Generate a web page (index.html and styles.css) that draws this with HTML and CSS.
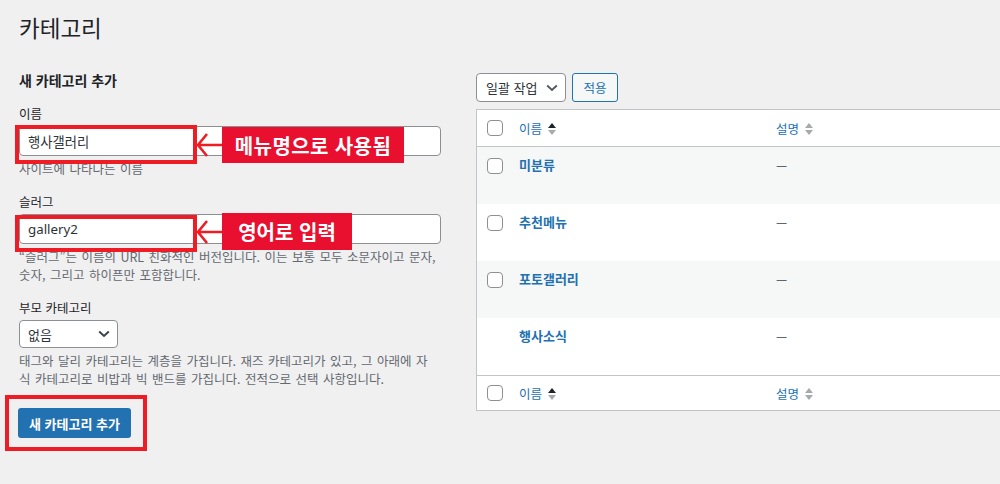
FILE: index.html
```html
<!DOCTYPE html>
<html lang="ko">
<head>
<meta charset="utf-8">
<title>카테고리</title>
<link rel="stylesheet" href="styles.css">
</head>
<body>
<div class="page">
  <h1 class="title">카테고리</h1>
  <div class="cols">
    <div class="col-left">
      <h2 class="form-title">새 카테고리 추가</h2>
      <div class="field">
        <label class="label">이름</label>
        <input class="input" type="text" value="행사갤러리">
        <p class="help">사이트에 나타나는 이름</p>
      </div>
      <div class="field">
        <label class="label">슬러그</label>
        <input class="input" type="text" value="gallery2">
        <p class="help">“슬러그”는 이름의 URL 친화적인 버전입니다. 이는 보통 모두 소문자이고 문자,<br>숫자, 그리고 하이픈만 포함합니다.</p>
      </div>
      <div class="field">
        <label class="label">부모 카테고리</label>
        <div class="select">
          <span>없음</span>
          <svg class="chev" width="12" height="8" viewBox="0 0 12 8"><polyline points="1.2,1.5 6,6 10.8,1.5" fill="none" stroke="#3c434a" stroke-width="2"/></svg>
        </div>
        <p class="help">태그와 달리 카테고리는 계층을 가집니다. 재즈 카테고리가 있고, 그 아래에 자<br>식 카테고리로 비밥과 빅 밴드를 가집니다. 전적으로 선택 사항입니다.</p>
      </div>
      <div class="submit"><span class="btn-primary">새 카테고리 추가</span></div>
    </div>

    <div class="col-right">
      <div class="toolbar">
        <div class="bulk">
          <span>일괄 작업</span>
          <svg class="chev-s" width="12" height="8" viewBox="0 0 12 8"><polyline points="1.2,1.5 6,6 10.8,1.5" fill="none" stroke="#50575e" stroke-width="1.8"/></svg>
        </div>
        <span class="apply">적용</span>
      </div>
      <table class="list">
        <thead>
          <tr>
            <th class="cb"><span class="check"></span></th>
            <th class="name"><span class="sort-link">이름<span class="sort asc"><i class="up"></i><i class="down"></i></span></span></th>
            <th class="desc"><span class="sort-link">설명<span class="sort"><i class="up"></i><i class="down"></i></span></span></th>
          </tr>
        </thead>
        <tbody>
          <tr class="alt">
            <td class="cb"><span class="check"></span></td>
            <td class="name"><strong>미분류</strong></td>
            <td class="desc">—</td>
          </tr>
          <tr>
            <td class="cb"><span class="check"></span></td>
            <td class="name"><strong>추천메뉴</strong></td>
            <td class="desc">—</td>
          </tr>
          <tr class="alt">
            <td class="cb"><span class="check"></span></td>
            <td class="name"><strong>포토갤러리</strong></td>
            <td class="desc">—</td>
          </tr>
          <tr>
            <td class="cb"></td>
            <td class="name"><strong>행사소식</strong></td>
            <td class="desc">—</td>
          </tr>
        </tbody>
        <tfoot>
          <tr>
            <th class="cb"><span class="check"></span></th>
            <th class="name"><span class="sort-link">이름<span class="sort asc"><i class="up"></i><i class="down"></i></span></span></th>
            <th class="desc"><span class="sort-link">설명<span class="sort"><i class="up"></i><i class="down"></i></span></span></th>
          </tr>
        </tfoot>
      </table>
    </div>
  </div>

  <div class="mark box1"></div>
  <svg class="arrow arrow1" width="28" height="28" viewBox="0 0 28 28"><path d="M3 14H27M12 3L3 14L12 25" fill="none" stroke="#ee1c25" stroke-width="2.6"/></svg>
  <div class="tag tag1">메뉴명으로 사용됨</div>

  <div class="mark box2"></div>
  <svg class="arrow arrow2" width="28" height="28" viewBox="0 0 28 28"><path d="M3 14H27M12 3L3 14L12 25" fill="none" stroke="#ee1c25" stroke-width="2.6"/></svg>
  <div class="tag tag2">영어로 입력</div>

  <div class="mark box3"></div>
</div>
</body>
</html>
```

FILE: styles.css
```css
html, body {
  margin: 0;
  padding: 0;
}

body {
  background: #f0f0f1;
  font-family: "Noto Sans CJK KR", "Noto Sans", sans-serif;
  font-size: 12.5px;
  color: #3c434a;
  overflow: hidden;
}

.page {
  position: relative;
  height: 484px;
  padding-left: 19px;
}

.title {
  margin: 0;
  padding-top: 12px;
  font-size: 22.5px;
  font-weight: 400;
  line-height: 30px;
  color: #1d2327;
}

.cols {
  display: flex;
  gap: 35px;
}

.col-left {
  width: 422px;
  flex: none;
}

.col-right {
  width: 620px;
  flex: none;
}

.form-title {
  margin: 28px 0 0;
  font-size: 14px;
  font-weight: 700;
  line-height: 20px;
  color: #1d2327;
}

.field {
  margin-top: 15px;
}

.label {
  display: block;
  line-height: 18px;
  color: #1d2327;
}

.input {
  display: block;
  box-sizing: border-box;
  width: 100%;
  height: 30px;
  margin: 3px 0 0;
  padding: 0 8px;
  border: 1px solid #8c8f94;
  border-radius: 4px;
  background: #fff;
  font-family: "Noto Sans", "Noto Sans CJK KR", sans-serif;
  font-size: 13.3px;
  color: #2c3338;
  outline: none;
}

.help {
  margin: 4px 0 0;
  line-height: 18px;
  color: #646970;
  word-spacing: 1px;
}

.select {
  box-sizing: border-box;
  width: 99px;
  height: 28px;
  margin-top: 3px;
  padding: 0 7px 0 8px;
  display: flex;
  align-items: center;
  justify-content: space-between;
  border: 1px solid #8c8f94;
  border-radius: 4px;
  background: #fff;
  font-size: 13px;
  color: #2c3338;
}

.submit {
  margin-top: 20px;
  margin-left: -1px;
}

.btn-primary {
  display: inline-flex;
  align-items: center;
  justify-content: center;
  box-sizing: border-box;
  width: 113px;
  height: 30px;
  border-radius: 3px;
  background: #2271b1;
  color: #fff;
  font-size: 13px;
  font-weight: 700;
}

/* right column */
.toolbar {
  margin-top: 31px;
  display: flex;
  gap: 6px;
}

.bulk {
  box-sizing: border-box;
  width: 90px;
  height: 29px;
  padding: 0 7px 0 9px;
  display: flex;
  align-items: center;
  justify-content: space-between;
  border: 1px solid #8c8f94;
  border-radius: 4px;
  background: #fff;
  font-size: 13px;
  color: #2c3338;
}

.apply {
  box-sizing: border-box;
  width: 46px;
  height: 29px;
  display: inline-flex;
  align-items: center;
  justify-content: center;
  border: 1px solid #2271b1;
  border-radius: 3px;
  background: #f6f7f7;
  color: #2271b1;
  font-size: 12.5px;
}

.list {
  margin-top: 7px;
  width: 620px;
  border: 1px solid #c3c4c7;
  border-spacing: 0;
  background: #fff;
  table-layout: fixed;
}

.list th,
.list td {
  padding: 0;
  text-align: left;
  font-weight: 400;
}

.list th.cb,
.list td.cb {
  width: 32px;
  padding-left: 10px;
  box-sizing: border-box;
}

.list .name {
  width: 257px;
  padding-left: 10px;
  box-sizing: border-box;
}

.list .desc {
  padding-left: 10px;
}

.list thead th {
  height: 36px;
  border-bottom: 1px solid #c3c4c7;
  vertical-align: middle;
}

.list tfoot th {
  height: 34px;
  border-top: 1px solid #c3c4c7;
  vertical-align: middle;
}

.list tbody td {
  height: 57px;
  box-sizing: border-box;
  vertical-align: top;
  padding-top: 9px;
  line-height: 18px;
}

.list tbody td.cb {
  padding-top: 11px;
}

.list tbody tr.alt td {
  background: #f6f7f7;
}

.check {
  display: block;
  box-sizing: border-box;
  width: 16px;
  height: 16px;
  border: 1px solid #8c8f94;
  border-radius: 4px;
  background: #fff;
}

.list td.name strong {
  color: #2271b1;
  font-size: 13px;
  font-weight: 700;
}

.list td.desc {
  color: #3c434a;
}

.sort-link {
  display: inline-flex;
  align-items: center;
  color: #2271b1;
  font-size: 12.5px;
  line-height: 18px;
}

.sort {
  display: inline-flex;
  flex-direction: column;
  gap: 2px;
  margin-left: 6px;
}

.sort i {
  display: block;
  width: 0;
  height: 0;
  border-left: 4px solid transparent;
  border-right: 4px solid transparent;
}

.sort .up {
  border-bottom: 5px solid #a7aaad;
}

.sort .down {
  border-top: 5px solid #a7aaad;
}

.sort.asc .up {
  border-bottom-color: #1d2327;
}

/* annotations */
.mark {
  position: absolute;
  box-sizing: border-box;
  border: 4px solid #ee1c25;
}

.box1 {
  left: 15px;
  top: 125px;
  width: 182px;
  height: 39px;
}

.box2 {
  left: 15px;
  top: 215px;
  width: 182px;
  height: 37px;
}

.box3 {
  left: 5px;
  top: 395px;
  width: 142px;
  height: 56px;
}

.arrow {
  position: absolute;
  left: 195px;
}

.arrow1 {
  top: 131px;
}

.arrow2 {
  top: 218px;
}

.tag {
  position: absolute;
  left: 222px;
  display: flex;
  align-items: center;
  justify-content: center;
  background: #e8102e;
  color: #fff;
  font-size: 20px;
  font-weight: 700;
}

.tag1 {
  top: 127px;
  width: 182px;
  height: 36px;
  letter-spacing: 0.4px;
}

.tag2 {
  top: 213px;
  width: 130px;
  height: 37px;
}
```
